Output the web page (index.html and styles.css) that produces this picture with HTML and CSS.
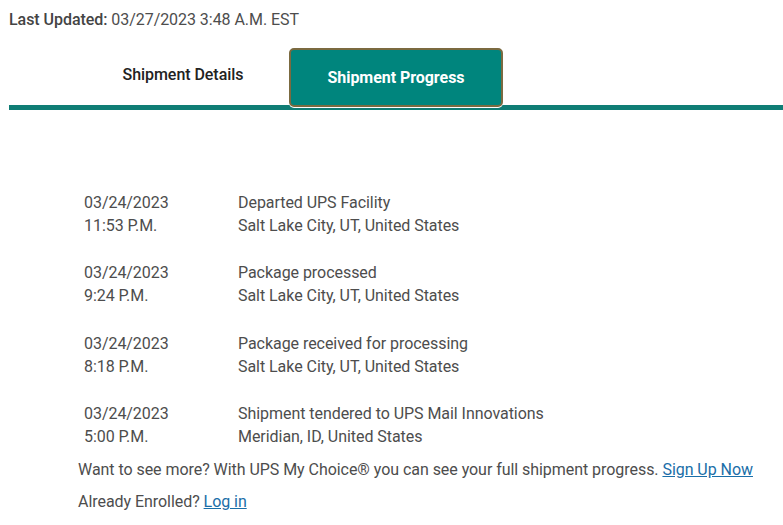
FILE: index.html
```html
<!DOCTYPE html>
<html>
<head>
<meta charset="utf-8">
<link rel="stylesheet" href="styles.css">
</head>
<body>
<div class="updated"><span class="updated-label">Last Updated:</span> 03/27/2023 3:48 A.M. EST</div>
<div class="tabs">
  <div class="tab">Shipment Details</div>
  <div class="tab tab-active">Shipment Progress</div>
</div>
<div class="progress">
  <div class="event">
    <div class="event-date">03/24/2023<br>11:53 P.M.</div>
    <div class="event-desc">Departed UPS Facility<br>Salt Lake City, UT, United States</div>
  </div>
  <div class="event">
    <div class="event-date">03/24/2023<br>9:24 P.M.</div>
    <div class="event-desc">Package processed<br>Salt Lake City, UT, United States</div>
  </div>
  <div class="event">
    <div class="event-date">03/24/2023<br>8:18 P.M.</div>
    <div class="event-desc">Package received for processing<br>Salt Lake City, UT, United States</div>
  </div>
  <div class="event">
    <div class="event-date">03/24/2023<br>5:00 P.M.</div>
    <div class="event-desc">Shipment tendered to UPS Mail Innovations<br>Meridian, ID, United States</div>
  </div>
</div>
<div class="more">
  <p class="more-line">Want to see more? With UPS My Choice® you can see your full shipment progress. <a href="#">Sign Up Now</a></p>
  <p class="more-line">Already Enrolled? <a href="#">Log in</a></p>
</div>
</body>
</html>
```
FILE: styles.css
```css
html, body {
  margin: 0;
  padding: 0;
  background: #ffffff;
}
body {
  font-family: Roboto, "Liberation Sans", Arial, sans-serif;
  color: #4d4d4d;
  font-size: 16px;
  line-height: 23px;
  letter-spacing: -0.05px;
}
.updated {
  padding: 8px 9px 0;
}
.updated-label {
  font-weight: 500;
  color: #444;
}
.tabs {
  display: flex;
  align-items: flex-end;
  margin: 0 0 0 9px;
  padding-left: 68px;
  border-bottom: 5px solid #0f7d75;
  height: 74px;
}
.tab {
  width: 212px;
  height: 59px;
  box-sizing: border-box;
  text-align: center;
  font-weight: 500;
  color: #222;
  padding-top: 15px;
  margin-bottom: -2px;
}
.tab-active {
  width: 214px;
  background: #00857d;
  color: #ffffff;
  font-weight: 700;
  border: 2px solid #7b6a40;
  border-radius: 5px;
  padding-top: 16px;
  position: relative;
  box-shadow: 0 1px 0 #ffffff;
}
.progress {
  padding: 81px 0 0 84px;
}
.event {
  display: flex;
  margin-bottom: 24.4px;
}
.event:last-child {
  margin-bottom: 0;
}
.event-date {
  width: 154px;
  flex-shrink: 0;
}
.more {
  padding-left: 78px;
}
.more-line {
  margin: 10px 0 0;
}
.more-line + .more-line {
  margin-top: 9px;
}
.more a {
  color: #1a6ea8;
  text-decoration: underline;
}
```
